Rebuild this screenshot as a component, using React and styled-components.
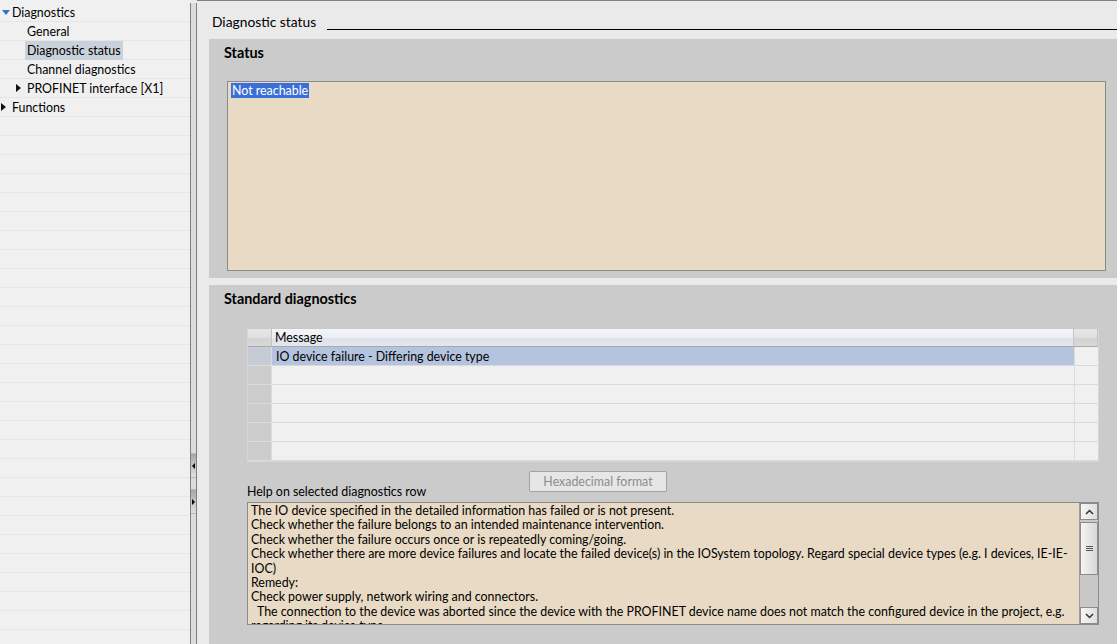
import React from "react";
import styled, { createGlobalStyle } from "styled-components";

const Global = createGlobalStyle`
  html, body { margin: 0; padding: 0; height: 100%; overflow: hidden; }
  body { font-family: "Lato", "Liberation Sans", sans-serif; font-size: 12.4px; color: #000; background: #eaeaea; }
  #root { height: 100%; }
`;

const FONT = `"Lato", "Liberation Sans", sans-serif`;
const FS = "12.4px";

const Page = styled.div`
  display: flex;
  height: 644px;
  width: 1117px;
  overflow: hidden;
`;

const Tree = styled.div`
  width: 190px;
  flex: none;
  background: #f0f0f0;
  padding-top: 3px;
  overflow: hidden;
`;

const TreeRow = styled.div`
  height: 18px;
  border-bottom: 1px solid #e6e6e6;
  display: flex;
  align-items: center;
  padding-left: ${(p) => p.$indent}px;
  font-family: ${FONT};
  font-size: ${FS};
  white-space: nowrap;
`;

const Toggle = styled.span`
  width: 0;
  height: 0;
  flex: none;
  margin-right: ${(p) => p.$gap}px;
  ${(p) =>
    p.$open
      ? `border-left: 4px solid transparent; border-right: 4px solid transparent; border-top: 5px solid #3a6fd0; margin-left: 2px;`
      : `border-top: 4px solid transparent; border-bottom: 4px solid transparent; border-left: 5px solid #111; margin-left: 1px;`}
`;

const Label = styled.span`
  padding: 2px 2px;
  line-height: 15px;
  background: ${(p) => (p.$selected ? "#c9d1da" : "transparent")};
`;

const Splitter = styled.div`
  width: 5px;
  flex: none;
  background: #dcdcdc;
  border-left: 1px solid #7f7f7f;
  border-right: 1px solid #7f7f7f;
  margin-top: 3px;
  display: flex;
  flex-direction: column;
  padding-top: 450px;
  gap: 11px;
`;

const SplitBtn = styled.div`
  height: 23px;
  background: linear-gradient(to bottom, #a8a8a8, #e0e0e0);
  border-top: 1px solid #b8b8b8;
  border-bottom: 1px solid #b8b8b8;
  display: flex;
  align-items: center;
  justify-content: center;
  &::after {
    content: "";
    width: 0;
    height: 0;
    border-top: 3px solid transparent;
    border-bottom: 3px solid transparent;
    ${(p) => (p.$dir === "left" ? "border-right: 3px solid #000;" : "border-left: 3px solid #000;")}
  }
`;

const Main = styled.div`
  flex: 1;
  background: #eaeaea;
  border-top: 1px solid #808080;
  display: flex;
  flex-direction: column;
  min-width: 0;
  overflow: hidden;
`;

const Header = styled.div`
  height: 38px;
  flex: none;
  display: flex;
  align-items: flex-start;
  padding-left: 15px;
  padding-top: 13px;
  box-sizing: border-box;
`;

const HeaderTitle = styled.span`
  font-family: ${FONT};
  font-size: 13.8px;
  line-height: 16px;
  white-space: nowrap;
`;

const HeaderRule = styled.div`
  flex: 1;
  height: 1px;
  background: #000;
  margin-top: 15px;
  margin-left: 11px;
`;

const Section = styled.div`
  margin-left: 12px;
  background: #cbcbcb;
  padding-top: 6px;
  box-sizing: border-box;
  flex: ${(p) => (p.$fill ? "1" : "none")};
  height: ${(p) => (p.$fill ? "auto" : `${p.$h}px`)};
  margin-top: ${(p) => p.$mt || 0}px;
  display: flex;
  flex-direction: column;
`;

const SectionTitle = styled.div`
  font-family: ${FONT};
  font-weight: 700;
  font-size: 14.4px;
  line-height: 16px;
  margin-left: 15px;
`;

const StatusBox = styled.div`
  margin: 20px 11px 0 18px;
  height: 186px;
  background: #e8dac4;
  border: 1px solid #8a8a8a;
  padding: 1px 3px;
  font-family: ${FONT};
  font-size: ${FS};
`;

const Selected = styled.span`
  background: #3a6fd8;
  color: #fff;
  padding: 0 1px;
  line-height: 15px;
  display: inline-block;
`;

const Table = styled.div`
  margin: 21px 18px 0 38px;
  border: 1px solid #d6d6d6;
  border-top: none;
  display: grid;
  grid-template-columns: 24px 1fr 24px;
  background: #f0f0f0;
  font-family: ${FONT};
  font-size: ${FS};
`;

const HeadCell = styled.div`
  box-sizing: border-box;
  border-bottom: 1px solid #a9a9a9;
  height: 19px;
  display: flex;
  align-items: center;
  padding-left: 3px;
  background: ${(p) =>
    p.$gray
      ? "linear-gradient(to bottom, #e6e6e6 0%, #e0e0e0 50%, #d2d2d2 51%, #d8d8d8 100%)"
      : "linear-gradient(to bottom, #f3f5f8 0%, #eceff3 50%, #dfe3e9 51%, #e3e6eb 100%)"};
  border-right: 1px solid #c6c6c6;
  border-top: 1px solid #c8c8c8;
`;

const RowHead = styled.div`
  height: 19px;
  box-sizing: border-box;
  background: ${(p) => (p.$selected ? "#c5ccd6" : "#cccccc")};
  border-bottom: 1px solid #dcdcdc;
  border-right: 1px solid #dcdcdc;
`;

const Cell = styled.div`
  height: 19px;
  box-sizing: border-box;
  background: ${(p) => (p.$selected ? "#b4c3de" : "#f0f0f0")};
  border-bottom: 1px solid #dadada;
  display: flex;
  align-items: center;
  padding-left: 4px;
  white-space: nowrap;
`;

const EndCell = styled.div`
  height: 19px;
  box-sizing: border-box;
  background: #f0f0f0;
  border-bottom: 1px solid #dadada;
  border-left: 1px solid #dcdcdc;
`;

const ButtonRow = styled.div`
  margin: 9px 0 0 320px;
  height: 20px;
  display: flex;
`;

const Button = styled.button`
  width: 138px;
  height: 21px;
  box-sizing: border-box;
  border: 1px solid #a3a3a3;
  border-radius: 2px;
  background: #e6e6e6;
  color: #8d8d8d;
  font-family: ${FONT};
  font-size: ${FS};
  padding: 0;
`;

const HelpLabel = styled.div`
  margin: -7px 0 0 38px;
  font-family: ${FONT};
  font-size: ${FS};
  line-height: 16px;
`;

const HelpBox = styled.div`
  margin: 2px 18px 0 38px;
  height: 123px;
  box-sizing: border-box;
  background: #e8dac4;
  border: 1px solid #8a8a8a;
  display: flex;
`;

const HelpText = styled.div`
  flex: 1;
  overflow: hidden;
  padding: 1px 3px;
  font-family: ${FONT};
  font-size: ${FS};
  line-height: 14.4px;
`;

const Line = styled.div`
  white-space: pre;
`;

const Scroll = styled.div`
  width: 18px;
  flex: none;
  background: #c8c8c8;
  display: flex;
  flex-direction: column;
  border-left: 1px solid #9a9a9a;
`;

const ScrollBtn = styled.div`
  height: 17px;
  box-sizing: border-box;
  border: 1px solid #8c8c8c;
  background: linear-gradient(to right, #f6f6f6, #dedede);
  display: flex;
  align-items: center;
  justify-content: center;
`;

const Thumb = styled.div`
  height: 53px;
  box-sizing: border-box;
  border: 1px solid #8c8c8c;
  background: linear-gradient(to right, #f4f4f4, #d8d8d8);
  display: flex;
  align-items: center;
  justify-content: center;
  margin-top: 2px;
`;

const Spacer = styled.div`
  flex: 1;
`;

const Chevron = ({ up }) => (
  <svg width="9" height="6" viewBox="0 0 9 6">
    <path d={up ? "M1 5 L4.5 1.5 L8 5" : "M1 1 L4.5 4.5 L8 1"} fill="none" stroke="#333" strokeWidth="1.5" />
  </svg>
);

const Grip = () => (
  <svg width="9" height="7" viewBox="0 0 9 7">
    <path d="M1 1.5H8M1 3.5H8M1 5.5H8" stroke="#555" strokeWidth="1" />
  </svg>
);

const helpLines = [
  "The IO device specified in the detailed information has failed or is not present.",
  "Check whether the failure belongs to an intended maintenance intervention.",
  "Check whether the failure occurs once or is repeatedly coming/going.",
  "Check whether there are more device failures and locate the failed device(s) in the IOSystem topology. Regard special device types (e.g. I devices, IE-IE-",
  "IOC)",
  "Remedy:",
  "Check power supply, network wiring and connectors.",
  "  The connection to the device was aborted since the device with the PROFINET device name does not match the configured device in the project, e.g.",
  "regarding its device type.",
];

export default function App() {
  const emptyRows = Array.from({ length: 28 });
  const tableRows = [true, false, false, false, false, false];
  return (
    <>
      <Global />
      <Page>
        <Tree>
          <TreeRow $indent={0}>
            <Toggle $open $gap={0} />
            <Label>Diagnostics</Label>
          </TreeRow>
          <TreeRow $indent={25}><Label>General</Label></TreeRow>
          <TreeRow $indent={25}><Label $selected>Diagnostic status</Label></TreeRow>
          <TreeRow $indent={25}><Label>Channel diagnostics</Label></TreeRow>
          <TreeRow $indent={15}>
            <Toggle $gap={4} />
            <Label>PROFINET interface [X1]</Label>
          </TreeRow>
          <TreeRow $indent={0}>
            <Toggle $gap={4} />
            <Label>Functions</Label>
          </TreeRow>
          {emptyRows.map((_, i) => (
            <TreeRow key={i} $indent={0} />
          ))}
        </Tree>
        <Splitter>
          <SplitBtn $dir="left" />
          <SplitBtn $dir="right" />
        </Splitter>
        <Main>
          <Header>
            <HeaderTitle>Diagnostic status</HeaderTitle>
            <HeaderRule />
          </Header>
          <Section $h={239}>
            <SectionTitle>Status</SectionTitle>
            <StatusBox>
              <Selected>Not reachable</Selected>
            </StatusBox>
          </Section>
          <Section $fill $mt={7}>
            <SectionTitle>Standard diagnostics</SectionTitle>
            <Table>
              <HeadCell $gray />
              <HeadCell>Message</HeadCell>
              <HeadCell $gray />
              {tableRows.map((sel, i) => (
                <React.Fragment key={i}>
                  <RowHead $selected={sel} />
                  <Cell $selected={sel}>{sel ? "IO device failure - Differing device type" : ""}</Cell>
                  <EndCell />
                </React.Fragment>
              ))}
            </Table>
            <ButtonRow>
              <Button disabled>Hexadecimal format</Button>
            </ButtonRow>
            <HelpLabel>Help on selected diagnostics row</HelpLabel>
            <HelpBox>
              <HelpText>
                {helpLines.map((l, i) => (
                  <Line key={i}>{l}</Line>
                ))}
              </HelpText>
              <Scroll>
                <ScrollBtn><Chevron up /></ScrollBtn>
                <Thumb><Grip /></Thumb>
                <Spacer />
                <ScrollBtn><Chevron /></ScrollBtn>
              </Scroll>
            </HelpBox>
          </Section>
        </Main>
      </Page>
    </>
  );
}
